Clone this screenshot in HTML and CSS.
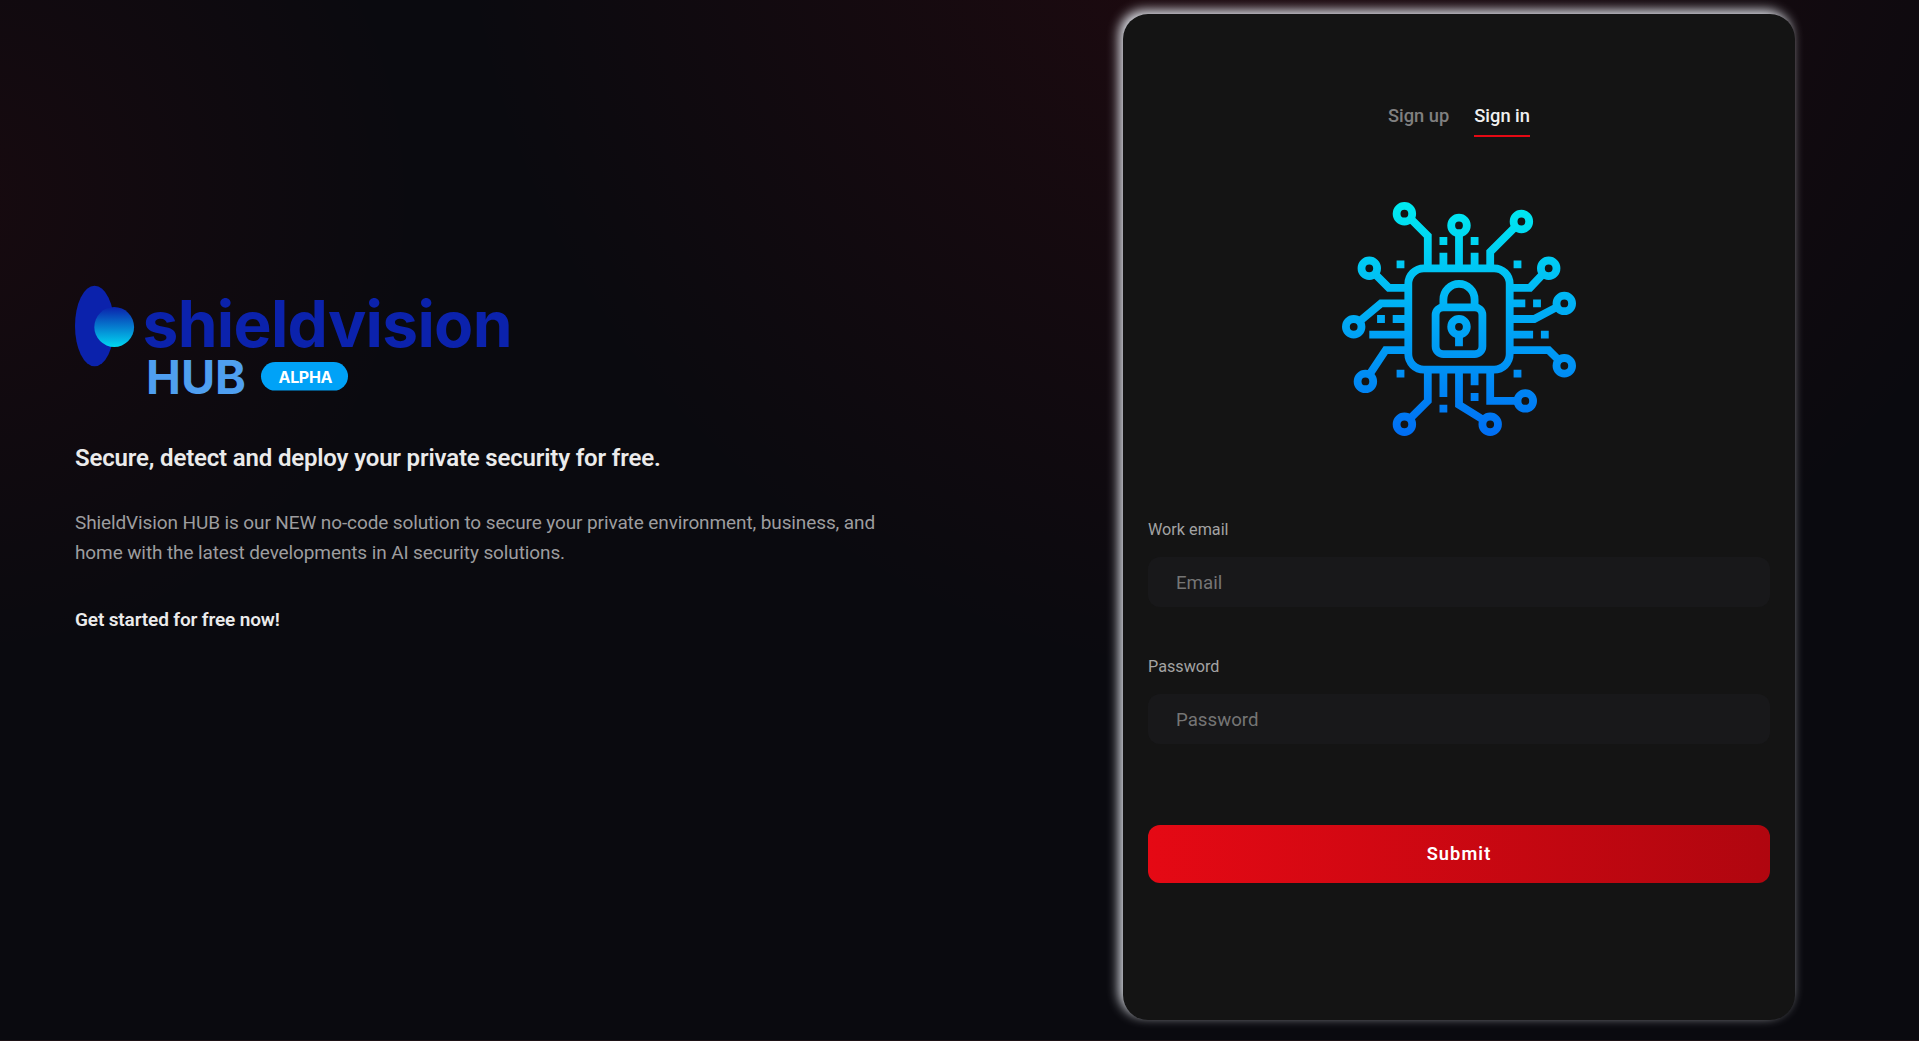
FILE: index.html
```html
<!DOCTYPE html>
<html lang="en">
<head>
<meta charset="utf-8">
<title>ShieldVision HUB</title>
<link rel="stylesheet" href="styles.css">
</head>
<body>
<main class="page">
  <section class="intro">
    <svg class="logo" viewBox="75 285 436 112" role="img" aria-label="shieldvision HUB alpha">
      <defs>
        <linearGradient id="orb" x1="0" y1="0" x2="0" y2="1">
          <stop offset="0" stop-color="#0b22ac"/>
          <stop offset="1" stop-color="#00d8f2"/>
        </linearGradient>
      </defs>
      <ellipse cx="94.6" cy="326" rx="19.6" ry="40.2" fill="#0b22ac"/>
      <circle cx="114.2" cy="327" r="19.9" fill="url(#orb)"/>
      <text class="logo-name" x="142.5" y="347" textLength="370">shieldvision</text>
      <text class="logo-hub" x="146" y="394" textLength="100" lengthAdjust="spacingAndGlyphs">HUB</text>
      <rect x="261" y="362" width="87" height="28.6" rx="14.3" fill="#00a2f7"/>
      <text class="logo-tag" x="278.5" y="383" textLength="54">ALPHA</text>
    </svg>
    <h1 class="headline">Secure, detect and deploy your private security for free.</h1>
    <p class="lead">ShieldVision HUB is our NEW no-code solution to secure your private environment, business, and home with the latest developments in AI security solutions.</p>
    <p class="cta">Get started for free now!</p>
  </section>
  <section class="card">
    <nav class="tabs">
      <a class="tab">Sign up</a>
      <a class="tab tab-active">Sign in</a>
    </nav>
    <svg class="chip" viewBox="0 0 60 60" aria-hidden="true">
      <defs>
        <linearGradient id="chipFill" gradientUnits="userSpaceOnUse" x1="0" y1="0" x2="0" y2="60">
          <stop offset="0" stop-color="#00ecf1"/>
          <stop offset=".45" stop-color="#00b0f5"/>
          <stop offset="1" stop-color="#006df3"/>
        </linearGradient>
      </defs>
      <g fill="none" stroke="url(#chipFill)" stroke-width="2">
        <rect x="17" y="17" width="26" height="26" rx="4"/>
        <rect x="24" y="27" width="12" height="12" rx="2"/>
        <path d="M26 27v-2a4 4 0 0 1 8 0v2M30.001 34L30 37"/>
        <circle cx="30" cy="32" r="2"/>
        <circle cx="16" cy="3" r="2"/><circle cx="30" cy="6" r="2"/><circle cx="46" cy="5" r="2"/>
        <circle cx="7" cy="17" r="2"/><circle cx="53" cy="17" r="2"/><circle cx="57" cy="26" r="2"/>
        <circle cx="3" cy="32" r="2"/><circle cx="6" cy="46" r="2"/><circle cx="57" cy="42" r="2"/>
        <circle cx="16" cy="57" r="2"/><circle cx="38" cy="57" r="2"/><circle cx="47" cy="51" r="2"/>
        <path d="M17.6 4.3L22 8.7V17M30 8L30.001 17M44.4 6.4L38 12.8V17"/>
        <path d="M8.4 18.4L12 22H17M51.6 18.4L48.2 22H43M4.6 30.5L10 26H17M55.2 26.9L49.3 30H43"/>
        <path d="M7 44.3L11.2 38H17M55.6 40.6L53 38H43"/>
        <path d="M17.6 55.4L22 51V43M30 43V52L36.3 55.9M38 43V51H45"/>
      </g>
      <path fill="url(#chipFill)" d="M25 9h2v2h-2zM33 9h2v2h-2zM25 13h2v4h-2zM33 13h2v4h-2zM14 15h2v2h-2zM44 15h2v2h-2zM9 29h2v2H9zM13 29h4v2h-4zM7 33h10v2H7zM43 25h4v2h-4zM49 25h2v2h-2zM43 33h6v2h-6zM51 33h2v2h-2zM14 43h2v2h-2zM44 43h2v2h-2zM25 43h2v7h-2zM25 52h2v2h-2zM33 43h2v4h-2zM33 49h2v2h-2z"/>
    </svg>
    <form class="form">
      <label class="label" for="email">Work email</label>
      <input class="field" id="email" type="email" placeholder="Email">
      <label class="label" for="password">Password</label>
      <input class="field" id="password" type="password" placeholder="Password">
      <button class="submit" type="button">Submit</button>
    </form>
  </section>
</main>
</body>
</html>
```
FILE: styles.css
```css
* { box-sizing: border-box; }

body {
  margin: 0;
  background: #0a0a0f;
  color: #ebebeb;
  font-family: Roboto, sans-serif;
}

.page {
  display: flex;
  justify-content: space-between;
  height: 1041px;
  overflow: hidden;
  padding: 14px 124px 0 75px;
  border-bottom: 1px solid #1c1216;
  background:
    radial-gradient(circle at -40px 200px, rgba(229, 9, 20, .06), transparent 460px),
    radial-gradient(circle at 1280px -140px, rgba(229, 9, 20, .1), transparent 830px),
    #0a0a0f;
}

.intro {
  width: 820px;
  padding-top: 271px;
}

.logo {
  display: block;
  width: 436px;
  height: 112px;
  overflow: visible;
}

.logo-name, .logo-hub, .logo-tag {
  font-family: Inter, sans-serif;
  font-weight: 700;
}
.logo-name { font-size: 64px; fill: #0b22ac; }
.logo-hub { font-size: 47px; fill: #4f9ff0; }
.logo-tag { font-size: 16px; fill: #fff; }

.headline {
  margin: 43px 0 0;
  font-size: 24px;
  font-weight: 600;
  letter-spacing: -.17px;
  line-height: 36px;
}

.lead {
  margin: 32px 0 0;
  color: #9d9d9f;
  font-size: 19px;
  letter-spacing: -.11px;
  line-height: 30px;
}

.cta {
  margin: 37px 0 0;
  font-size: 19px;
  font-weight: 600;
  letter-spacing: -.14px;
  line-height: 30px;
}

.card {
  display: flex;
  flex-direction: column;
  align-items: center;
  width: 672px;
  height: 1006px;
  padding: 85px 25px 0;
  border-radius: 25px;
  background: #141414;
  box-shadow: -4px -4px 12px #dcdfe6;
}

.tabs {
  display: flex;
  gap: 25px;
}

.tab {
  height: 38px;
  color: #808080;
  font-size: 18.3px;
  font-weight: 500;
  line-height: 34px;
}
.tab-active {
  color: #f0f0f0;
  border-bottom: 2px solid #e50914;
}

.chip {
  width: 234px;
  height: 234px;
  margin-top: 65px;
}

.form {
  display: flex;
  flex-direction: column;
  width: 100%;
  margin-top: 82px;
}

.label {
  color: #a3a3a3;
  font-size: 16.2px;
  line-height: 24px;
}

.field {
  height: 50px;
  margin: 15px 0 48px;
  padding: 1px 28px 0;
  border: 0;
  border-radius: 12px;
  background: #18181a;
  color: #ebebeb;
  font: 18.7px Roboto, sans-serif;
}
.field::placeholder { color: #757575; }

.submit {
  height: 58px;
  margin-top: 33px;
  padding-bottom: 3px;
  border: 0;
  border-radius: 12px;
  background: linear-gradient(90deg, #e50914, #b0060f);
  color: #fff;
  font: 600 18.2px Roboto, sans-serif;
  letter-spacing: 1.1px;
}
```
